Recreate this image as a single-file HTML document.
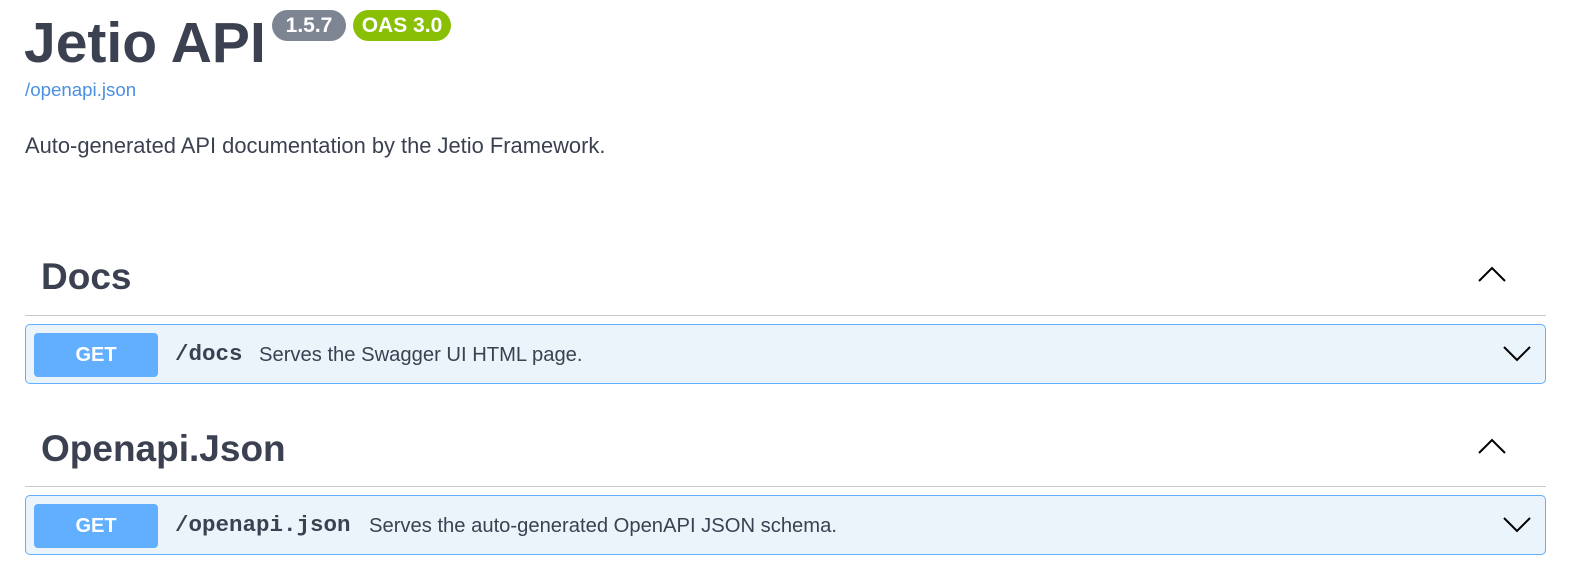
<!DOCTYPE html>
<html><head><meta charset="utf-8"><style>
body{margin:0;background:#fff;width:1588px;height:588px;overflow:hidden;font-family:"Liberation Sans",Arial,sans-serif;color:#3b4151;position:relative}
.a{position:absolute;white-space:nowrap}
h1{margin:0;font-size:57px;font-weight:bold;line-height:1}
.badge{position:absolute;color:#fff;font-weight:bold;font-size:21px;border-radius:16px;text-align:center;line-height:31px;height:31px}
.h2{font-size:37px;font-weight:bold;line-height:1}
.line{position:absolute;left:25px;width:1521px;height:1px;background:#c8c9cc}
.op{position:absolute;left:25px;width:1519px;height:58px;background:#ebf3fb;border:1px solid #61affe;border-radius:5px}
.get{position:absolute;left:8px;top:8px;width:124px;height:44px;background:#61affe;border-radius:4px;color:#fff;font-weight:bold;font-size:20px;text-align:center;line-height:44px}
.path{position:absolute;left:149px;top:17px;font-family:"Liberation Mono",monospace;font-weight:bold;font-size:22.5px;line-height:24px;color:#3b4151}
.desc{position:absolute;top:18px;font-size:20.2px;line-height:24px;color:#3b4151}
svg{position:absolute}
</style></head><body>
<h1 class="a" style="left:24px;top:15px">Jetio API</h1>
<div class="badge" style="left:272px;top:10px;width:74px;background:#7d8492">1.5.7</div>
<div class="badge" style="left:353px;top:10px;width:98px;background:#89bf04">OAS 3.0</div>
<div class="a" style="left:25px;top:79px;font-size:18.7px;color:#4990e2">/openapi.json</div>
<div class="a" style="left:25px;top:133px;font-size:21.9px">Auto-generated API documentation by the Jetio Framework.</div>

<div class="a h2" style="left:41px;top:258px">Docs</div>
<svg style="left:1476px;top:264px" width="32" height="20" viewBox="0 0 32 20"><path d="M3 17 L16 4 L29 17" fill="none" stroke="#000" stroke-width="2"/></svg>
<div class="line" style="top:315px"></div>
<div class="op" style="top:324px">
<div class="get">GET</div>
<div class="path">/docs</div>
<div class="desc" style="left:233px">Serves the Swagger UI HTML page.</div>
<svg style="left:1475px;top:19px" width="32" height="20" viewBox="0 0 32 20"><path d="M3 3 L16 16 L29 3" fill="none" stroke="#000" stroke-width="2"/></svg>
</div>

<div class="a h2" style="left:41px;top:430px">Openapi.Json</div>
<svg style="left:1476px;top:436px" width="32" height="20" viewBox="0 0 32 20"><path d="M3 17 L16 4 L29 17" fill="none" stroke="#000" stroke-width="2"/></svg>
<div class="line" style="top:486px"></div>
<div class="op" style="top:495px">
<div class="get">GET</div>
<div class="path">/openapi.json</div>
<div class="desc" style="left:343px">Serves the auto-generated OpenAPI JSON schema.</div>
<svg style="left:1475px;top:19px" width="32" height="20" viewBox="0 0 32 20"><path d="M3 3 L16 16 L29 3" fill="none" stroke="#000" stroke-width="2"/></svg>
</div>
</body></html>
